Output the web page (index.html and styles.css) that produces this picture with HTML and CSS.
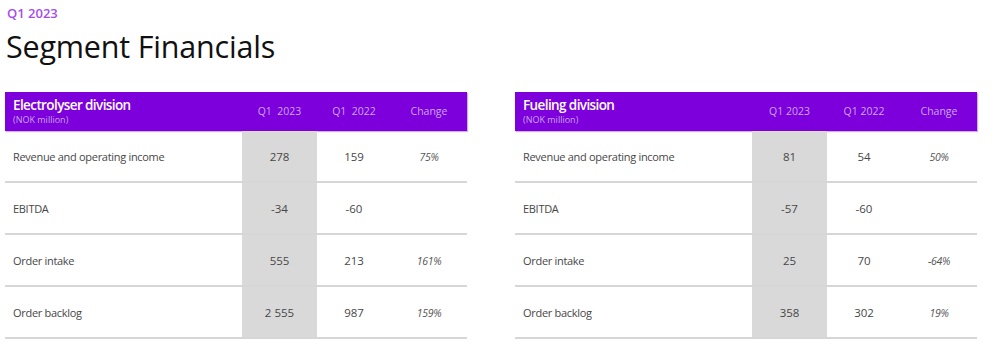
FILE: index.html
```html
<!DOCTYPE html>
<html>
<head>
<meta charset="utf-8">
<link rel="stylesheet" href="styles.css">
</head>
<body>
<div class="page">
  <div class="kicker">Q1 2023</div>
  <h1 class="title">Segment Financials</h1>
  <div class="tables">
    <div class="fin">
      <div class="hd">
        <div class="hd-label"><div class="hd-name">Electrolyser division</div><div class="hd-unit">(NOK million)</div></div>
        <div class="hd-col">Q1  2023</div>
        <div class="hd-col">Q1  2022</div>
        <div class="hd-col">Change</div>
      </div>
      <div class="row"><div class="lbl">Revenue and operating income</div><div class="num cur">278</div><div class="num">159</div><div class="chg">75%</div></div>
      <div class="row"><div class="lbl">EBITDA</div><div class="num cur">-34</div><div class="num">-60</div><div class="chg"></div></div>
      <div class="row"><div class="lbl">Order intake</div><div class="num cur">555</div><div class="num">213</div><div class="chg">161%</div></div>
      <div class="row"><div class="lbl">Order backlog</div><div class="num cur">2 555</div><div class="num">987</div><div class="chg">159%</div></div>
    </div>
    <div class="fin">
      <div class="hd">
        <div class="hd-label"><div class="hd-name">Fueling division</div><div class="hd-unit">(NOK million)</div></div>
        <div class="hd-col">Q1 2023</div>
        <div class="hd-col">Q1 2022</div>
        <div class="hd-col">Change</div>
      </div>
      <div class="row"><div class="lbl">Revenue and operating income</div><div class="num cur">81</div><div class="num">54</div><div class="chg">50%</div></div>
      <div class="row"><div class="lbl">EBITDA</div><div class="num cur">-57</div><div class="num">-60</div><div class="chg"></div></div>
      <div class="row"><div class="lbl">Order intake</div><div class="num cur">25</div><div class="num">70</div><div class="chg">-64%</div></div>
      <div class="row"><div class="lbl">Order backlog</div><div class="num cur">358</div><div class="num">302</div><div class="chg">19%</div></div>
    </div>
  </div>
</div>
</body>
</html>
```

FILE: styles.css
```css
html, body {
  margin: 0;
  padding: 0;
  background: #ffffff;
}
body {
  font-family: "Open Sans", "Noto Sans", sans-serif;
  color: #474747;
}
.page {
  padding: 4px 0 0 5px;
}
.kicker {
  font-size: 13px;
  font-weight: 600;
  color: #a54cf0;
  padding-left: 2px;
  line-height: 18px;
}
.title {
  margin: 3px 0 0 1px;
  font-size: 30.5px;
  font-weight: 400;
  color: #111111;
  line-height: 42px;
  letter-spacing: -0.2px;
}
.tables {
  display: flex;
  gap: 48px;
  margin-top: 25px;
}
.fin {
  width: 462px;
}
.hd, .row {
  display: grid;
  grid-template-columns: 237px 75px 74px 76px;
}
.hd {
  background: #7d00dc;
  height: 39px;
  box-shadow: 1px 1px 1px rgba(150, 80, 220, 0.45);
}
.hd-label {
  padding: 5px 0 0 8px;
}
.hd-name {
  color: #ffffff;
  font-size: 13.5px;
  font-weight: 600;
  line-height: 17px;
  letter-spacing: -0.6px;
}
.hd-unit {
  color: #c7a4f0;
  font-size: 9px;
  line-height: 11px;
}
.hd-col {
  color: #c9a6f2;
  font-size: 10.5px;
  text-align: center;
  line-height: 39px;
  white-space: pre;
}
.row {
  height: 50px;
  border-bottom: 2px solid #d6d6d6;
}
.row > div {
  display: flex;
  align-items: center;
  padding-top: 1px;
  font-size: 11.5px;
}
.lbl {
  padding-left: 8px;
  font-size: 11px !important;
  letter-spacing: -0.3px;
}
.num {
  justify-content: center;
}
.cur {
  background: #d9d9d9;
}
.chg {
  justify-content: center;
  font-style: italic;
  font-size: 10.5px !important;
  letter-spacing: -0.3px;
  color: #555555;
}
```
